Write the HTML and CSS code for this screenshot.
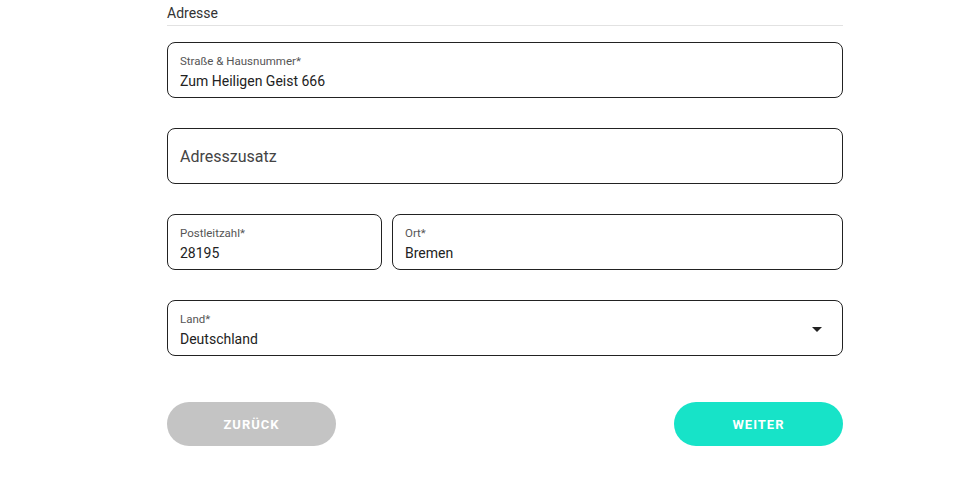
FILE: index.html
```html
<!DOCTYPE html>
<html lang="de">
<head>
<meta charset="utf-8">
<link rel="stylesheet" href="styles.css">
</head>
<body>
<form class="form">
  <div class="section-title">Adresse</div>
  <div class="field">
    <span class="label">Straße &amp; Hausnummer*</span>
    <span class="value">Zum Heiligen Geist 666</span>
  </div>
  <div class="field field-empty">
    <span class="placeholder">Adresszusatz</span>
  </div>
  <div class="row">
    <div class="field field-plz">
      <span class="label">Postleitzahl*</span>
      <span class="value">28195</span>
    </div>
    <div class="field field-ort">
      <span class="label">Ort*</span>
      <span class="value">Bremen</span>
    </div>
  </div>
  <div class="field field-select">
    <div class="select-text">
      <span class="label">Land*</span>
      <span class="value">Deutschland</span>
    </div>
    <span class="caret"></span>
  </div>
  <div class="actions">
    <button type="button" class="btn btn-back">ZURÜCK</button>
    <button type="button" class="btn btn-next">WEITER</button>
  </div>
</form>
</body>
</html>
```
FILE: styles.css
```css
* { box-sizing: border-box; }
html, body { margin: 0; padding: 0; background: #fff; }
body {
  font-family: "Roboto", "Noto Sans", sans-serif;
  color: #222;
  width: 980px;
  height: 484px;
  overflow: hidden;
}
.form {
  width: 676px;
  margin-left: 167px;
  display: flex;
  flex-direction: column;
}
.section-title {
  font-size: 14px;
  color: #333;
  line-height: 16px;
  padding-top: 5px;
  padding-bottom: 4px;
  border-bottom: 1px solid #e2e2e2;
  margin-bottom: 16px;
}
.field {
  height: 56px;
  border: 1px solid #222;
  border-radius: 8px;
  padding: 11px 12px 0 12px;
  display: flex;
  flex-direction: column;
  margin-bottom: 30px;
}
.label {
  font-size: 11.5px;
  color: #555;
  line-height: 14px;
}
.value {
  font-size: 14px;
  color: #222;
  line-height: 17px;
  margin-top: 5px;
}
.field-empty {
  justify-content: center;
  padding-top: 0;
}
.placeholder {
  font-size: 16px;
  color: #444;
}
.row {
  display: flex;
  gap: 10px;
}
.field-plz { width: 215px; flex: none; }
.field-ort { flex: 1; }
.field-select {
  flex-direction: row;
  align-items: flex-start;
  justify-content: space-between;
  padding-right: 20px;
  margin-bottom: 46px;
}
.select-text {
  display: flex;
  flex-direction: column;
}
.caret {
  align-self: center;
  width: 0;
  height: 0;
  border-left: 5px solid transparent;
  border-right: 5px solid transparent;
  border-top: 5px solid #222;
  margin-top: -8px;
}
.actions {
  display: flex;
  justify-content: space-between;
}
.btn {
  width: 169px;
  height: 44px;
  border: none;
  border-radius: 22px;
  color: #fff;
  font-family: "Roboto", sans-serif;
  font-weight: 700;
  font-size: 13px;
  letter-spacing: 1px;
  cursor: pointer;
}
.btn-back { background: #c4c4c4; }
.btn-next { background: #17e3c8; }
```
